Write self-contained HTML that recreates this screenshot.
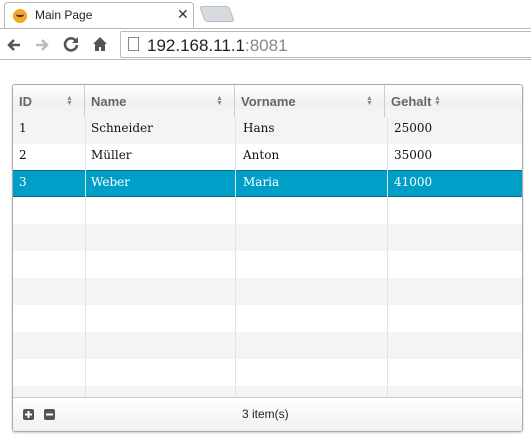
<!DOCTYPE html><html><head><style>
*{margin:0;padding:0;box-sizing:border-box}
body{width:531px;height:438px;background:#fff;font-family:"Liberation Sans",sans-serif;position:relative;overflow:hidden}
.tabbar{position:absolute;left:0;top:0;width:531px;height:28px;background:#fff}
.tab{position:absolute;left:4px;top:2px;width:190px;height:27px;border:1px solid #b8b8b8;border-bottom:none;border-radius:4px 4px 0 0;background:#fff}
.tab2{position:absolute;left:202px;top:6px;width:30px;height:16px;background:#d7dbe0;border:1px solid #b8bcc2;border-radius:3px;transform:skewX(20deg)}
.toolbar{position:absolute;left:0;top:28px;width:531px;height:32px;background:#fff;border-top:1px solid #b8b8b8;border-bottom:1px solid #bbb}
.url{position:absolute;left:120px;top:2px;width:420px;height:27px;border:1px solid #bbb;border-radius:2px;font-size:17px;padding:4px 0 0 26px;color:#222}
.grid{position:absolute;left:12px;top:84px;width:511px;height:348px;border:1px solid #aaa;border-radius:3px;box-shadow:0 1px 2px rgba(0,0,0,.2);overflow:hidden}
.hd{position:absolute;left:0;top:0;width:100%;height:33px;background:linear-gradient(#fff,#f0f0f0 60%,#f6f6f6);border-bottom:1px solid #ccc;font-weight:bold;color:#666;font-size:13px;font-family:"Liberation Sans",sans-serif}
.hd div{position:absolute;top:0;height:33px;padding:9px 0 0 6px;border-right:1px solid #ccc}
.ar{position:absolute;top:11px;font-size:7px;color:#888;line-height:5px}
.row{position:absolute;left:0;width:100%;height:27px;font-family:"DejaVu Serif","Liberation Serif",serif;font-size:12px;color:#111}
.row div{position:absolute;top:0;height:27px;padding:4px 0 0 6px}
.vl{position:absolute;top:33px;height:282px;width:1px;background:#e2e2e2}
.ft{position:absolute;left:0;bottom:0;width:100%;height:34px;border-top:1px solid #ccc;background:linear-gradient(#fff,#f0f0f0);font-size:12px;color:#222}
.ic{position:absolute;top:11px;width:11px;height:11px;background:#555;border-radius:2px}
</style></head><body>
<div class="tabbar"><div class="tab">
<div style="position:absolute;left:8px;top:6px;width:14px;height:14px;border-radius:50%;background:#f5a623"></div>
<div style="position:absolute;left:11px;top:11px;width:8px;height:3px;border-bottom:2px solid #333;border-radius:0 0 4px 4px"></div>
<span style="position:absolute;left:30px;top:5px;font-size:12px;color:#222">Main Page</span>
<span style="position:absolute;left:172px;top:3px;font-size:14px;color:#333">✕</span></div>
<div class="tab2"></div></div>
<div class="toolbar">
<svg style="position:absolute;left:6px;top:8px" width="16" height="16" viewBox="0 0 16 16"><path d="M14 8H3M8 3L3 8l5 5" stroke="#555" stroke-width="2.5" fill="none"/></svg>
<svg style="position:absolute;left:34px;top:8px" width="16" height="16" viewBox="0 0 16 16"><path d="M2 8h11M8 3l5 5-5 5" stroke="#bbb" stroke-width="2.5" fill="none"/></svg>
<svg style="position:absolute;left:63px;top:7px" width="16" height="16" viewBox="0 0 16 16"><path d="M13 5A6 6 0 1 0 14 9" stroke="#555" stroke-width="2.6" fill="none"/><path d="M15 1v6H9z" fill="#555"/></svg>
<svg style="position:absolute;left:92px;top:7px" width="16" height="16" viewBox="0 0 16 16"><path d="M8 1L1 8h2v7h4v-4h2v4h4V8h2z" fill="#555"/></svg>
<div class="url"><span style="position:absolute;left:7px;top:5px;width:11px;height:14px;border:1px solid #888"></span>192.168.11.1<span style="color:#888">:8081</span></div>
</div>
<div class="grid">
<div class="hd">
<div style="left:0;width:72px">ID</div>
<div style="left:72px;width:150px">Name</div>
<div style="left:222px;width:150px">Vorname</div>
<div style="left:372px;width:140px;border-right:none">Gehalt</div>
<span class="ar" style="left:53px">▲<br>▼</span>
<span class="ar" style="left:203px">▲<br>▼</span>
<span class="ar" style="left:353px">▲<br>▼</span>
<span class="ar" style="left:421px">▲<br>▼</span>
</div>
<div class="row" style="top:32px;background:#f4f4f4"><div style="left:0">1</div><div style="left:72px">Schneider</div><div style="left:224px">Hans</div><div style="left:375px">25000</div></div>
<div class="row" style="top:59px;background:#fff"><div style="left:0">2</div><div style="left:72px">Müller</div><div style="left:224px">Anton</div><div style="left:375px">35000</div></div>
<div class="row" style="top:85px;background:#009fc8;color:#fff;border-top:1px solid #00708e;border-bottom:1px solid #00708e"><div style="left:0">3</div><div style="left:72px">Weber</div><div style="left:224px">Maria</div><div style="left:375px">41000</div></div>
<div class="row" style="top:139px;background:#f4f4f4"></div>
<div class="row" style="top:193px;background:#f4f4f4"></div>
<div class="row" style="top:247px;background:#f4f4f4"></div>
<div class="row" style="top:301px;background:#f4f4f4"></div>
<div class="vl" style="left:72px"></div><div class="vl" style="left:222px"></div><div class="vl" style="left:374px"></div>
<div class="ft"><div class="ic" style="left:10px"><svg width="11" height="11"><path d="M5.5 2v7M2 5.5h7" stroke="#fff" stroke-width="2"/></svg></div><div class="ic" style="left:31px"><svg width="11" height="11"><path d="M2 5.5h7" stroke="#fff" stroke-width="2"/></svg></div><span style="position:absolute;left:229px;top:9px">3 item(s)</span></div>
</div>
</body></html>
